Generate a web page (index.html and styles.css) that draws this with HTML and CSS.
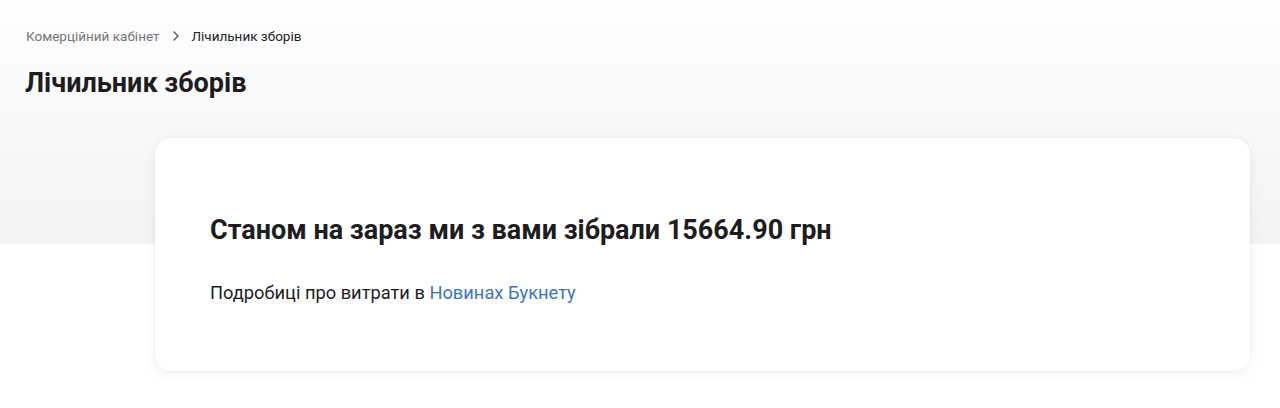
FILE: index.html
```html
<!DOCTYPE html>
<html lang="uk">
<head>
<meta charset="utf-8">
<link rel="stylesheet" href="styles.css">
</head>
<body>
<div class="page">
  <nav class="crumbs">
    <span class="crumb-link">Комерційний кабінет</span>
    <svg class="crumb-sep" width="8" height="12" viewBox="0 0 8 12"><path d="M1.5 1.5 L6 6 L1.5 10.5" fill="none" stroke="#555" stroke-width="1.4"/></svg>
    <span class="crumb-current">Лічильник зборів</span>
  </nav>
  <h1 class="title">Лічильник зборів</h1>
  <section class="card">
    <h2 class="card-title">Станом на зараз ми з вами зібрали 15664.90 грн</h2>
    <p class="card-text">Подробиці про витрати в <a class="link" href="#">Новинах Букнету</a></p>
  </section>
</div>
</body>
</html>
```
FILE: styles.css
```css
* { box-sizing: border-box; }
html, body { margin: 0; padding: 0; }
body {
  font-family: Roboto, "Noto Sans", sans-serif;
  color: #1d1d1f;
  background: #fff;
}
.page {
  min-height: 408px;
  background: linear-gradient(to bottom, #fefefe 0, #f3f3f3 244px, #ffffff 244px);
  padding: 27px 30px 30px 26px;
}
.crumbs {
  display: flex;
  align-items: center;
  font-size: 13.5px;
  line-height: 18px;
}
.crumb-link { color: #767676; }
.crumb-sep { margin: 0 12px 0 12px; }
.crumb-current { color: #222; }
.title {
  margin: 21px 0 0 -1px;
  font-size: 27px;
  line-height: 34px;
  font-weight: 700;
  color: #1d1d1f;
}
.card {
  margin: 38px 0 0 129px;
  background: #fff;
  border-radius: 16px;
  box-shadow: 0 2px 14px rgba(0,0,0,0.06), 0 0 0 1px rgba(0,0,0,0.025);
  padding: 74px 55px 66px;
  height: 233px;
}
.card-title {
  margin: 0;
  font-size: 27px;
  line-height: 36px;
  font-weight: 700;
  color: #1d1d1f;
}
.card-text {
  margin: 33px 0 0;
  font-size: 18.3px;
  line-height: 24px;
  color: #1d1d1f;
}
.link { color: #3d74be; text-decoration: none; }
```
